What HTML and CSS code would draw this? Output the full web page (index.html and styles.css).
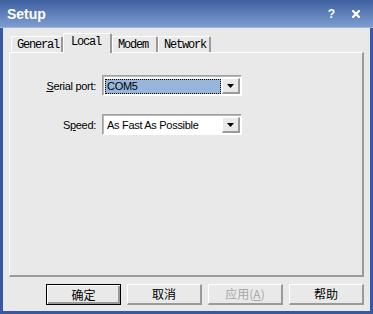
FILE: index.html
```
<!DOCTYPE html>
<html>
<head>
<meta charset="utf-8">
<link rel="stylesheet" href="styles.css">
</head>
<body>
<div class="window">
  <div class="titlebar">
    <span class="title">Setup</span>
    <span class="tb-help">?</span>
    <svg class="tb-close" width="8" height="8" viewBox="0 0 8 8"><path d="M1 1L7 7M7 1L1 7" stroke="#fff" stroke-width="2.2" stroke-linecap="square"/></svg>
  </div>
  <div class="client">
    <div class="tabs">
      <div class="tab t-general">General</div>
      <div class="tab t-local active">Local</div>
      <div class="tab t-modem">Modem</div>
      <div class="tab t-network">Network</div>
    </div>
    <div class="panel">
      <div class="form">
        <span class="lbl"><u>S</u>erial port:</span>
        <div class="combo">
          <div class="field"><span class="value selected">COM5</span></div>
          <div class="drop"><svg width="7" height="4" viewBox="0 0 7 4"><path d="M0 0H7L3.5 4Z" fill="#000"/></svg></div>
        </div>
        <span class="lbl">S<u>p</u>eed:</span>
        <div class="combo">
          <div class="field"><span class="value">As Fast As Possible</span></div>
          <div class="drop"><svg width="7" height="4" viewBox="0 0 7 4"><path d="M0 0H7L3.5 4Z" fill="#000"/></svg></div>
        </div>
      </div>
    </div>
    <div class="buttons">
      <div class="btn default"><span>确定</span></div>
      <div class="btn"><span>取消</span></div>
      <div class="btn disabled"><span>应用(<u>A</u>)</span></div>
      <div class="btn"><span>帮助</span></div>
    </div>
  </div>
</div>
</body>
</html>
```
FILE: styles.css
```
html, body {
  margin: 0;
  padding: 0;
  background: #e9e9e9;
}
.window {
  width: 373px;
  height: 314px;
  display: flex;
  flex-direction: column;
  overflow: hidden;
}
.titlebar {
  height: 27px;
  flex: none;
  display: flex;
  align-items: center;
  background: linear-gradient(#3f60a0, #7d9dd0);
  border-bottom: 1px solid #9cb4dc;
  color: #fff;
  font-family: "Liberation Sans", Arial, sans-serif;
  font-weight: bold;
}
.title {
  font-size: 14px;
  margin-left: 7px;
  flex: 1;
  padding-top: 1px;
}
.tb-help {
  font-size: 12px;
  margin-right: 17px;
}
.tb-close {
  margin-right: 13px;
  margin-top: 1px;
}
.client {
  flex: 1;
  display: flex;
  flex-direction: column;
  border-left: 3px solid #3558a8;
  border-right: 3px solid #3558a8;
  border-bottom: 3px solid #3558a8;
  padding: 5px 6px 0 6px;
  background: #e9e9e9;
}
.tabs {
  display: flex;
  align-items: flex-start;
  height: 20px;
  margin-bottom: -1px;
  padding-left: 2px;
  position: relative;
  z-index: 1;
}
.tab {
  box-sizing: border-box;
  height: 16px;
  margin-top: 3px;
  border-left: 1px solid #fff;
  border-top: 1px solid #fff;
  border-right: 2px solid #9a9a9a;
  border-top-left-radius: 2px;
  border-top-right-radius: 2px;
  background: #e9e9e9;
  font-family: "Liberation Mono", "Courier New", monospace;
  font-size: 12px;
  letter-spacing: -1.2px;
  line-height: 16px;
  padding-left: 5px;
  color: #000;
}
.t-general { width: 52px; }
.t-local { width: 49px; }
.t-modem { width: 46px; }
.t-network { width: 53px; padding-left: 5px; }
.tab.active {
  height: 20px;
  margin-top: 0;
  padding-left: 7px;
  line-height: 17px;
}
.panel {
  height: 225px;
  box-sizing: border-box;
  border-top: 1px solid #fff;
  border-left: 1px solid #fff;
  border-right: 2px solid #9a9a9a;
  border-bottom: 2px solid #9a9a9a;
}
.form {
  display: grid;
  grid-template-columns: 86px 140px;
  column-gap: 6px;
  row-gap: 18px;
  margin-top: 22px;
  align-items: center;
  font-family: "Liberation Sans", Arial, sans-serif;
  font-size: 11px;
  letter-spacing: -0.3px;
}
.lbl {
  text-align: right;
  color: #000;
  padding-top: 1px;
}
.combo {
  box-sizing: border-box;
  height: 21px;
  display: flex;
  border-top: 1px solid #a0a0a0;
  border-left: 1px solid #a0a0a0;
  border-right: 1px solid #fff;
  border-bottom: 1px solid #fff;
  box-shadow: inset 1px 1px 0 #b8b8b8;
  background: #fff;
  padding: 2px 1px 1px 2px;
}
.field {
  flex: 1;
  display: flex;
  padding: 1px 1px 0 0;
}
.value {
  flex: 1;
  line-height: 14px;
  padding-left: 2px;
  color: #000;
}
.value.selected {
  background: #98b6dc;
  outline: 1px dotted #000;
  outline-offset: -1px;
}
.drop {
  width: 18px;
  box-sizing: border-box;
  background: #e9e9e9;
  border-top: 1px solid #fff;
  border-left: 1px solid #fff;
  border-right: 2px solid #9a9a9a;
  border-bottom: 2px solid #9a9a9a;
  display: flex;
  align-items: center;
  justify-content: center;
}
.buttons {
  display: flex;
  justify-content: flex-end;
  gap: 6px;
  margin-top: 7px;
}
.btn {
  box-sizing: border-box;
  width: 75px;
  height: 21px;
  display: flex;
  align-items: center;
  justify-content: center;
  border-top: 1px solid #fff;
  border-left: 1px solid #fff;
  border-right: 2px solid #9a9a9a;
  border-bottom: 2px solid #9a9a9a;
  background: #e9e9e9;
  font-family: "Noto Sans CJK SC", "Liberation Sans", sans-serif;
  font-size: 12px;
  color: #000;
}
.btn.default {
  border: 1px solid #000;
  box-shadow: inset 1px 1px 0 #fff, inset -2px -2px 0 #9a9a9a;
}
.btn.disabled {
  color: #a8a8a8;
}
.btn span {
  line-height: 14px;
}
```
